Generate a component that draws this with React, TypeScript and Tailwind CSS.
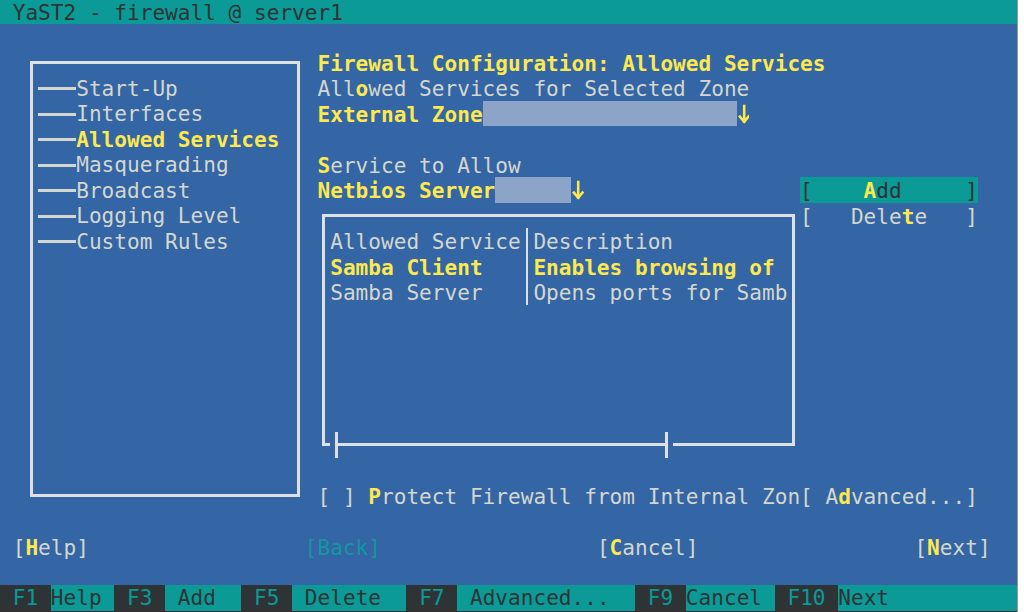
import type { ReactNode } from 'react';

// 80x24 terminal: one cell = 12.7px wide, 25.5px tall

function Hot({ children }: { children: ReactNode }) {
  return <span className="font-bold text-[#fce94f]">{children}</span>;
}

function DownArrow() {
  return (
    <svg width="12.7" height="25.5" viewBox="0 0 12.7 25.5" className="shrink-0">
      <g fill="none" stroke="#fce94f" strokeWidth="2.6" strokeLinecap="square">
        <path d="M7.2 5v15.5" />
        <path d="M2.9 15.6l4.3 5.2 4.3-5.2" />
      </g>
    </svg>
  );
}

function TreeItem({ label, active }: { label: string; active?: boolean }) {
  return (
    <div className="flex h-[25.5px] items-center">
      <span className="h-[3px] w-[38.1px] bg-[#d3d7cf]" />
      <span className={active ? 'font-bold text-[#fce94f]' : ''}>{label}</span>
    </div>
  );
}

function Sep() {
  return (
    <span className="flex w-[12.7px] justify-center">
      <span className="w-[2.5px] bg-[#dde1e4]" />
    </span>
  );
}

function Key({ k, label }: { k: string; label: string }) {
  return (
    <>
      <span className="bg-[#2e3436] text-[#0b9a96]">{k}</span>
      <span className="bg-[#0b9a96] text-[#2e3436]">{label}</span>
    </>
  );
}

const tree = ['Start-Up', 'Interfaces', 'Allowed Services', 'Masquerading', 'Broadcast', 'Logging Level', 'Custom Rules'];

export default function App() {
  return (
    <div className="flex h-[612px] w-[1024px] overflow-hidden bg-white">
      <div className="flex w-[1017px] shrink-0 flex-col whitespace-pre bg-[#3465a4] font-['DejaVu_Sans_Mono','Liberation_Mono',monospace] text-[21.1px] leading-[25.5px] text-[#d3d7cf]">
        <div className="h-[24px] bg-[#0b9a96] pl-[12.7px] leading-[25px] text-[#2e3436]">YaST2 - firewall @ server1</div>

        <div className="flex h-[510px] pt-[25.5px]">
          {/* tree */}
          <div className="w-[317.5px] shrink-0">
            <div className="ml-[30.25px] mt-[11.25px] h-[436.5px] w-[269.7px] border-[3px] border-[#dde1e4] pl-[4.85px] pt-[12px]">
              {tree.map((t) => (
                <TreeItem key={t} label={t} active={t === 'Allowed Services'} />
              ))}
            </div>
          </div>

          {/* dialog */}
          <div className="flex flex-1 flex-col">
            <div className="h-[25.5px] pt-px font-bold text-[#fce94f]">Firewall Configuration: Allowed Services</div>
            <div className="h-[25.5px] pt-px">
              All<Hot>o</Hot>wed Services for Selected Zone
            </div>
            <div className="flex h-[25.5px] font-bold text-[#fce94f]">
              <span className="pt-px">External Zone</span>
              <span className="w-[254px] bg-[#8ba4c7]" />
              <DownArrow />
            </div>
            <div className="h-[25.5px]" />
            <div className="h-[25.5px] pt-px">
              <Hot>S</Hot>ervice to Allow
            </div>

            <div className="flex h-[280.5px]">
              <div className="w-[482.6px] shrink-0">
                <div className="flex h-[25.5px] font-bold text-[#fce94f]">
                  <span className="pt-px">Netbios Server</span>
                  <span className="w-[76.2px] bg-[#8ba4c7]" />
                  <DownArrow />
                </div>
                <div className="relative ml-[4.9px] mt-[11.25px] h-[232.5px] w-[473px] border-[3px] border-[#dde1e4] pl-[4.8px] pt-[11.25px]">
                  <div className="flex h-[25.5px]">
                    <span className="w-[190.5px] pt-px">Allowed Service</span>
                    <Sep />
                    <span className="pt-px">Description</span>
                  </div>
                  <div className="flex h-[25.5px] font-bold text-[#fce94f]">
                    <span className="w-[190.5px] pt-px">Samba Client</span>
                    <Sep />
                    <span className="pt-px">Enables browsing of</span>
                  </div>
                  <div className="flex h-[25.5px]">
                    <span className="w-[190.5px] pt-px">Samba Server</span>
                    <Sep />
                    <span className="pt-px">Opens ports for Samb</span>
                  </div>
                  {/* horizontal scrollbar on the bottom edge */}
                  <div className="absolute left-[-3px] top-[215.25px] flex h-[25.5px] items-center">
                    <span className="w-[7.8px]" />
                    <span className="h-[3px] w-[4.8px] bg-[#3465a4]" />
                    <span className="h-full w-[3px] bg-[#dde1e4]" />
                    <span className="w-[327.25px]" />
                    <span className="h-full w-[3px] bg-[#dde1e4]" />
                    <span className="h-[3px] w-[4.85px] bg-[#3465a4]" />
                  </div>
                </div>
              </div>
              <div className="flex flex-col">
                <div className="h-[25.5px] bg-[#0b9a96] pt-px text-[#2e3436]">
                  [    <Hot>A</Hot>dd     ]
                </div>
                <div className="h-[25.5px] pt-px">
                  [   Dele<Hot>t</Hot>e   ]
                </div>
              </div>
            </div>

            <div className="h-[25.5px]" />
            <div className="h-[25.5px] pt-px">
              [ ] <Hot>P</Hot>rotect Firewall from Internal Zon[ A<Hot>d</Hot>vanced...]
            </div>
          </div>
        </div>

        <div className="h-[25.5px] pt-px">
          {' ['}
          <Hot>H</Hot>
          {'elp]                 '}
          <span className="text-[#1496a2]">[Back]</span>
          {'                 ['}
          <Hot>C</Hot>
          {'ancel]                 ['}
          <Hot>N</Hot>
          {'ext]'}
        </div>
        <div className="h-[25.5px]" />

        <div className="flex h-[25.5px]">
          <Key k=" F1 " label="Help " />
          <Key k=" F3 " label=" Add  " />
          <Key k=" F5 " label=" Delete  " />
          <Key k=" F7 " label=" Advanced...  " />
          <Key k=" F9 " label="Cancel " />
          <Key k=" F10 " label="Next" />
          <span className="flex-1 bg-[#0b9a96]" />
        </div>
        <div className="flex-1 bg-[#3b2b2b]" />
      </div>
      <div className="flex-1 border-l border-[#9a9a9a] bg-white" />
    </div>
  );
}
